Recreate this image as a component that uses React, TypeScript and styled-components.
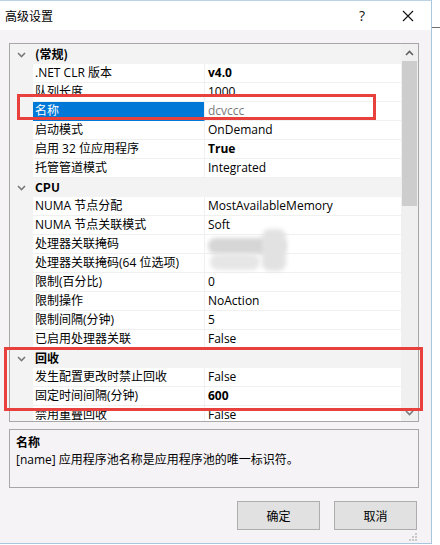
import React from "react";
import styled, { createGlobalStyle } from "styled-components";

const Global = createGlobalStyle`
  html, body { margin: 0; padding: 0; background: #ffffff; }
  body { font-family: "Open Sans", "Noto Sans CJK SC", sans-serif; font-size: 12px; color: #000; }
  * { box-sizing: border-box; }
`;

const Page = styled.div`
  position: relative;
  width: 440px;
  height: 545px;
  display: flex;
  overflow: hidden;
`;

const Dialog = styled.div`
  width: 432px;
  height: 544px;
  display: flex;
  flex-direction: column;
  background: #f6f3f7;
  border-top: 1px solid #bcd3e6;
  border-right: 1px solid #a9c6df;
  border-bottom: 1px solid #a9c6df;
`;

const Behind = styled.div`
  flex: 1;
  display: flex;
  flex-direction: column;
`;

const BehindTop = styled.div`
  height: 28px;
  background: #ffffff;
  border-bottom: 1px solid #6f6f6f;
`;

const BehindRest = styled.div`
  flex: 1;
  background: #ffffff;
`;

const TitleBar = styled.div`
  height: 29px;
  background: #ffffff;
  display: flex;
  align-items: center;
  padding-left: 5px;
  flex-shrink: 0;
`;

const Title = styled.div`
  flex: 1;
  font-family: "Noto Sans CJK SC", sans-serif;
  font-size: 12px;
  line-height: 16px;
`;

const TitleButton = styled.div<{ $w: number }>`
  width: ${(p) => p.$w}px;
  height: 29px;
  display: flex;
  align-items: center;
  justify-content: center;
  font-size: 14px;
  color: #111;
`;

const Body = styled.div`
  flex: 1;
  display: flex;
  flex-direction: column;
  padding: 13px 12px 0 9px;
`;

const Grid = styled.div`
  height: 379px;
  border: 1px solid #a7a7a7;
  background: #f3f3f3;
  display: flex;
  overflow: hidden;
`;

const Rows = styled.div`
  flex: 1;
  padding-top: 1px;
  display: flex;
  flex-direction: column;
  overflow: hidden;
`;

const RowBox = styled.div`
  height: 19px;
  flex-shrink: 0;
  display: flex;
`;

const Gutter = styled.div`
  width: 23px;
  flex-shrink: 0;
  display: flex;
  align-items: center;
  justify-content: center;
`;

const CatLabel = styled.div`
  flex: 1;
  padding-left: 2px;
  font-family: "Noto Sans CJK SC", sans-serif;
  font-weight: 700;
  line-height: 18px;
  background: #f3f3f3;
`;

const NameCell = styled.div<{ $sel?: boolean }>`
  width: 172px;
  flex-shrink: 0;
  padding-left: 2px;
  line-height: 18px;
  height: 19px;
  white-space: nowrap;
  overflow: hidden;
  background: ${(p) => (p.$sel ? "#0078d7" : "#ffffff")};
  color: ${(p) => (p.$sel ? "#ffffff" : "#000000")};
  border-bottom: 1px solid ${(p) => (p.$sel ? "#0078d7" : "#f0f0f0")};
  border-right: 1px solid #f0f0f0;
`;

const ValueCell = styled.div<{ $bold?: boolean; $dim?: boolean }>`
  flex: 1;
  padding-left: 3px;
  line-height: 18px;
  height: 19px;
  white-space: nowrap;
  background: #ffffff;
  font-weight: ${(p) => (p.$bold ? 700 : 400)};
  color: ${(p) => (p.$dim ? "#7a7a7a" : "#000000")};
  border-bottom: 1px solid #f0f0f0;
`;

const Scrollbar = styled.div`
  width: 17px;
  flex-shrink: 0;
  background: #f0f0f0;
  display: flex;
  flex-direction: column;
  align-items: center;
`;

const ArrowBtn = styled.div`
  height: 17px;
  width: 17px;
  display: flex;
  align-items: center;
  justify-content: center;
  flex-shrink: 0;
`;

const Thumb = styled.div`
  width: 15px;
  height: 145px;
  background: #cdcdcd;
  flex-shrink: 0;
`;

const Track = styled.div`
  flex: 1;
`;

const Desc = styled.div`
  margin-top: 7px;
  height: 59px;
  border: 1px solid #a7a7a7;
  padding: 3px 6px;
  font-family: "Noto Sans CJK SC", sans-serif;
`;

const DescTitle = styled.div`
  font-weight: 700;
  line-height: 18px;
`;

const DescText = styled.div`
  line-height: 18px;
  font-family: "Open Sans", "Noto Sans CJK SC", sans-serif;
`;

const Buttons = styled.div`
  margin-top: 13px;
  display: flex;
  justify-content: flex-end;
  gap: 14px;
  padding-right: 2px;
`;

const Button = styled.div`
  width: 83px;
  height: 29px;
  background: #e1e1e1;
  border: 1px solid #adadad;
  display: flex;
  align-items: center;
  justify-content: center;
  font-family: "Noto Sans CJK SC", sans-serif;
`;

const Footer = styled.div`
  flex: 1;
  display: flex;
  justify-content: flex-end;
  align-items: flex-end;
  padding: 0 2px 2px 0;
`;

const Grip = styled.svg`
  display: block;
`;

const RedBox = styled.div<{ $l: number; $t: number; $w: number; $h: number }>`
  position: absolute;
  left: ${(p) => p.$l}px;
  top: ${(p) => p.$t}px;
  width: ${(p) => p.$w}px;
  height: ${(p) => p.$h}px;
  border: 3px solid #e8403d;
  pointer-events: none;
`;

const Blur = styled.div<{ $l: number; $t: number; $w: number; $h: number; $c: string }>`
  position: absolute;
  left: ${(p) => p.$l}px;
  top: ${(p) => p.$t}px;
  width: ${(p) => p.$w}px;
  height: ${(p) => p.$h}px;
  background: ${(p) => p.$c};
  filter: blur(2px);
  border-radius: 8px;
`;

const Chevron = ({ up = false }: { up?: boolean }) => (
  <svg width="9" height="6" viewBox="0 0 9 6">
    <path
      d={up ? "M1 5 L4.5 1.5 L8 5" : "M1 1 L4.5 4.5 L8 1"}
      fill="none"
      stroke={up ? "#606060" : "#7a7a7a"}
      strokeWidth="1.6"
    />
  </svg>
);

type Item =
  | { cat: string }
  | { name: string; value: string; bold?: boolean; sel?: boolean; dim?: boolean };

const items: Item[] = [
  { cat: "(常规)" },
  { name: ".NET CLR 版本", value: "v4.0", bold: true },
  { name: "队列长度", value: "1000" },
  { name: "名称", value: "dcvccc", sel: true, dim: true },
  { name: "启动模式", value: "OnDemand" },
  { name: "启用 32 位应用程序", value: "True", bold: true },
  { name: "托管管道模式", value: "Integrated" },
  { cat: "CPU" },
  { name: "NUMA 节点分配", value: "MostAvailableMemory" },
  { name: "NUMA 节点关联模式", value: "Soft" },
  { name: "处理器关联掩码", value: "" },
  { name: "处理器关联掩码(64 位选项)", value: "" },
  { name: "限制(百分比)", value: "0" },
  { name: "限制操作", value: "NoAction" },
  { name: "限制间隔(分钟)", value: "5" },
  { name: "已启用处理器关联", value: "False" },
  { cat: "回收" },
  { name: "发生配置更改时禁止回收", value: "False" },
  { name: "固定时间间隔(分钟)", value: "600", bold: true },
  { name: "禁用重叠回收", value: "False" },
];

export default function App() {
  return (
    <>
      <Global />
      <Page>
        <Dialog>
          <TitleBar>
            <Title>高级设置</Title>
            <TitleButton $w={46}>?</TitleButton>
            <TitleButton $w={46}>
              <svg width="12" height="12" viewBox="0 0 12 12">
                <path d="M1 1 L11 11 M11 1 L1 11" stroke="#111" strokeWidth="1.1" />
              </svg>
            </TitleButton>
          </TitleBar>
          <Body>
            <Grid>
              <Rows>
                {items.map((it, i) =>
                  "cat" in it ? (
                    <RowBox key={i}>
                      <Gutter>
                        <Chevron />
                      </Gutter>
                      <CatLabel>{it.cat}</CatLabel>
                    </RowBox>
                  ) : (
                    <RowBox key={i}>
                      <Gutter />
                      <NameCell $sel={it.sel}>{it.name}</NameCell>
                      <ValueCell $bold={it.bold} $dim={it.dim}>
                        {it.value}
                      </ValueCell>
                    </RowBox>
                  )
                )}
              </Rows>
              <Scrollbar>
                <ArrowBtn>
                  <Chevron up />
                </ArrowBtn>
                <Thumb />
                <Track />
                <ArrowBtn>
                  <Chevron />
                </ArrowBtn>
              </Scrollbar>
            </Grid>
            <Desc>
              <DescTitle>名称</DescTitle>
              <DescText>[name] 应用程序池名称是应用程序池的唯一标识符。</DescText>
            </Desc>
            <Buttons>
              <Button>确定</Button>
              <Button>取消</Button>
            </Buttons>
            <Footer>
              <Grip width="9" height="9" viewBox="0 0 9 9">
                <rect x="7" y="1" width="2" height="2" fill="#c9c9c9" />
                <rect x="4" y="4" width="2" height="2" fill="#c9c9c9" />
                <rect x="7" y="4" width="2" height="2" fill="#c9c9c9" />
                <rect x="1" y="7" width="2" height="2" fill="#c9c9c9" />
                <rect x="4" y="7" width="2" height="2" fill="#c9c9c9" />
                <rect x="7" y="7" width="2" height="2" fill="#c9c9c9" />
              </Grip>
            </Footer>
          </Body>
        </Dialog>
        <Behind>
          <BehindTop />
          <BehindRest />
        </Behind>
        <Blur $l={208} $t={238} $w={78} $h={16} $c="#d6d6d6" />
        <Blur $l={262} $t={229} $w={24} $h={42} $c="#e2e2e2" />
        <Blur $l={210} $t={254} $w={50} $h={16} $c="#e6e6e6" />
        <RedBox $l={17} $t={94} $w={359} $h={26} />
        <RedBox $l={4} $t={347} $w={419} $h={64} />
      </Page>
    </>
  );
}
